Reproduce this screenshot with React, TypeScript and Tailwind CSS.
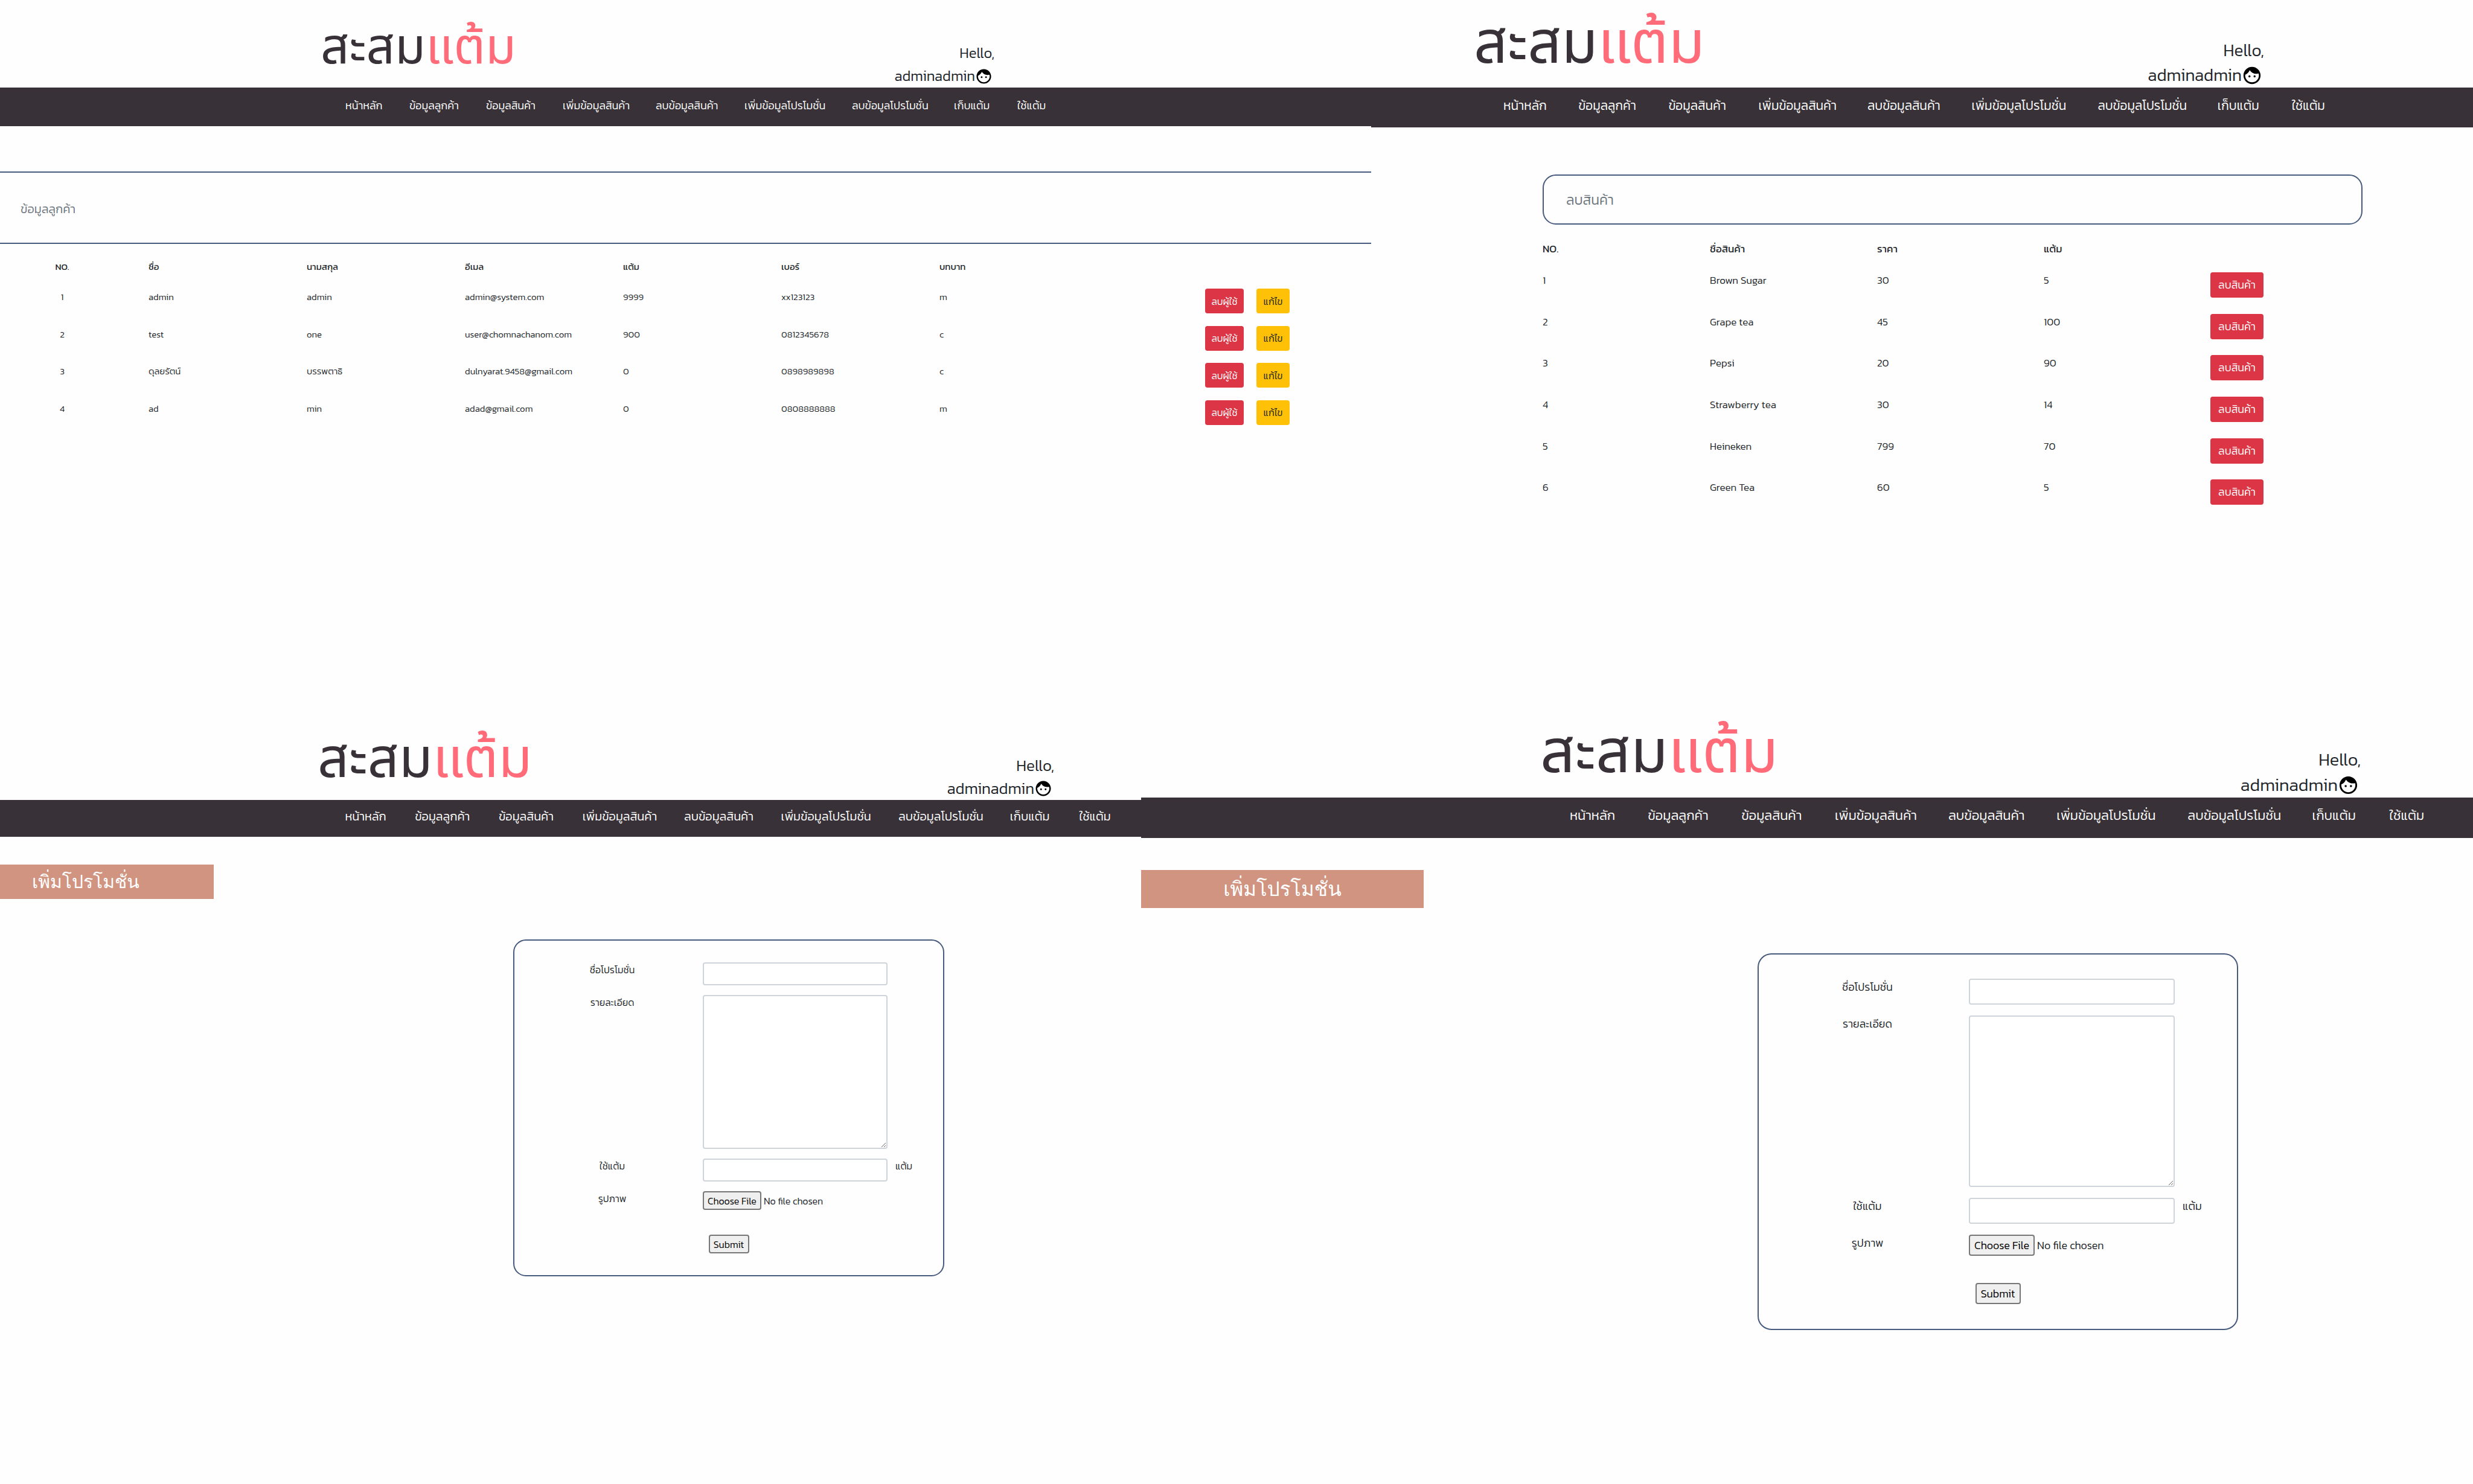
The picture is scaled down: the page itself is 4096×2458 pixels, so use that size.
import { useId } from "react";
import { MdFace } from "react-icons/md";

const navItems = [
  "หน้าหลัก",
  "ข้อมูลลูกค้า",
  "ข้อมูลสินค้า",
  "เพิ่มข้อมูลสินค้า",
  "ลบข้อมูลสินค้า",
  "เพิ่มข้อมูลโปรโมชั่น",
  "ลบข้อมูลโปรโมชั่น",
  "เก็บแต้ม",
  "ใช้แต้ม",
];

const customers = [
  ["1", "admin", "admin", "admin@system.com", "9999", "xx123123", "m"],
  ["2", "test", "one", "user@chomnachanom.com", "900", "0812345678", "c"],
  ["3", "ดุลยรัตน์", "บรรพตาธิ", "dulnyarat.9458@gmail.com", "0", "0898989898", "c"],
  ["4", "ad", "min", "adad@gmail.com", "0", "0808888888", "m"],
];

const products = [
  ["1", "Brown Sugar", "30", "5"],
  ["2", "Grape tea", "45", "100"],
  ["3", "Pepsi", "20", "90"],
  ["4", "Strawberry tea", "30", "14"],
  ["5", "Heineken", "799", "70"],
  ["6", "Green Tea", "60", "5"],
];

type HeaderStyle = {
  bar: string;
  logo: string;
  user: string;
  icon: string;
  nav: string;
  list: string;
};

function SiteHeader({ s }: { s: HeaderStyle }) {
  return (
    <>
      <header className={`grid items-end ${s.bar}`}>
        <a
          href="#"
          className={`col-start-2 whitespace-nowrap font-['Noto_Sans_Thai',Kanit,sans-serif] leading-[80px] text-[#383238] ${s.logo}`}
        >
          สะสม<span className="text-[#ff6b78]">แต้ม</span>
        </a>
        <div className={`text-right font-light ${s.user}`}>
          <p>Hello,</p>
          <p className="flex items-center justify-end pr-[3px]">
            adminadmin
            <MdFace className={`shrink-0 text-black ${s.icon}`} />
          </p>
        </div>
      </header>
      <nav className={`grid bg-[#383238] text-white ${s.nav}`}>
        <ul
          className={`col-start-2 grid grid-cols-[106fr_127fr_127fr_154fr_147fr_178fr_169fr_105fr_93fr] whitespace-nowrap font-light leading-[36px] ${s.list}`}
        >
          {navItems.map((item) => (
            <li key={item} className="min-w-0">
              <a href="#">{item}</a>
            </li>
          ))}
        </ul>
      </nav>
    </>
  );
}

function CustomersPanel() {
  const cols = "grid grid-cols-[246fr_262fr_262fr_262fr_262fr_262fr_440fr_275fr]";
  return (
    <section>
      <SiteHeader
        s={{
          bar: "h-[145px] grid-cols-[531fr_400fr_716fr_624fr]",
          logo: "pb-[25px] text-[83px]",
          user: "text-[24px] leading-[38px]",
          icon: "size-[29px]",
          nav: "h-[64px] pt-[12px] grid-cols-[572fr_1206fr_493fr]",
          list: "text-[18px]",
        }}
      />
      <main className="pt-[75px]">
        <h1 className="flex h-[120px] items-center border-y-2 border-[#465a7d] pl-[34px] pt-1 text-[20px] font-light text-[#6c757d]">
          ข้อมูลลูกค้า
        </h1>
        <table className="mt-[26px] block text-[15px] leading-[24px]">
          <thead className="block">
            <tr className={`${cols} text-left`}>
              <th className="pr-[40px] text-center font-normal">NO.</th>
              <th className="font-normal">ชื่อ</th>
              <th className="font-normal">นามสกุล</th>
              <th className="font-normal">อีเมล</th>
              <th className="font-normal">แต้ม</th>
              <th className="font-normal">เบอร์</th>
              <th className="font-normal">บทบาท</th>
            </tr>
          </thead>
          <tbody className="mt-[24px] grid h-[246px] auto-rows-fr font-light">
            {customers.map((row) => (
              <tr key={row[0]} className={cols}>
                {row.map((cell, i) => (
                  <td key={i} className={i === 0 ? "pr-[40px] pt-[2px] text-center" : "pt-[2px]"}>
                    {cell}
                  </td>
                ))}
                <td className="flex items-start gap-[21px]">
                  <button className="h-[41px] w-[64px] rounded-[4px] bg-[#dc3545] text-[16px] text-white">ลบผู้ใช้</button>
                  <button className="h-[41px] w-[55px] rounded-[4px] bg-[#ffc107] text-[16px]">แก้ไข</button>
                </td>
              </tr>
            ))}
          </tbody>
        </table>
      </main>
    </section>
  );
}

function ProductsPanel() {
  const cols = "grid grid-cols-[277fr_277fr_276fr_276fr_252fr]";
  return (
    <section>
      <SiteHeader
        s={{
          bar: "h-[145px] grid-cols-[170fr_500fr_809fr_346fr]",
          logo: "pb-[31px] text-[98px]",
          user: "text-[28px] leading-[41px]",
          icon: "size-[34px]",
          nav: "h-[66px] pt-[12px] grid-cols-[219fr_1415fr_191fr]",
          list: "text-[21px]",
        }}
      />
      <main className="grid grid-cols-[284fr_1358fr_183fr] pt-[78px]">
        <div className="col-start-2">
          <h1 className="flex h-[83px] items-center rounded-[22px] border-2 border-[#465a7d] pl-[37px] pt-px text-[23px] font-light text-[#6c757d]">
            ลบสินค้า
          </h1>
          <table className="mt-[28px] block text-[17px] leading-[24px]">
            <thead className="block">
              <tr className={`${cols} text-left`}>
                <th className="font-normal">NO.</th>
                <th className="font-normal">ชื่อสินค้า</th>
                <th className="font-normal">ราคา</th>
                <th className="font-normal">แต้ม</th>
              </tr>
            </thead>
            <tbody className="mt-[27px] grid h-[412px] auto-rows-fr font-light">
              {products.map((row) => (
                <tr key={row[0]} className={cols}>
                  {row.map((cell, i) => (
                    <td key={i} className="pt-px">
                      {cell}
                    </td>
                  ))}
                  <td>
                    <button className="h-[42px] w-[88px] rounded-[4px] bg-[#dc3545] text-[18px] text-white">ลบสินค้า</button>
                  </td>
                </tr>
              ))}
            </tbody>
          </table>
        </div>
      </main>
    </section>
  );
}

type FormStyle = {
  shell: string;
  card: string;
  grid: string;
  label: string;
  input: string;
  area: string;
  file: string;
  submit: string;
};

function PromotionForm({ s }: { s: FormStyle }) {
  const id = useId();
  const field = "w-full rounded-[4px] border-2 border-[#ced4da] bg-white px-3";
  return (
    <div className={`grid ${s.shell}`}>
      <form className={`col-start-2 border-2 border-[#465a7d] font-light ${s.card}`}>
        <div className={`grid items-start ${s.grid}`}>
          <label htmlFor={`${id}-name`} className={s.label}>
            ชื่อโปรโมชั่น
          </label>
          <input id={`${id}-name`} type="text" className={`${field} ${s.input}`} />
          <span />
          <label htmlFor={`${id}-detail`} className={s.label}>
            รายละเอียด
          </label>
          <textarea id={`${id}-detail`} className={`${field} block resize ${s.area}`} />
          <span />
          <label htmlFor={`${id}-points`} className={s.label}>
            ใช้แต้ม
          </label>
          <input id={`${id}-points`} type="text" className={`${field} ${s.input}`} />
          <span className="pl-[13px]">แต้ม</span>
          <label htmlFor={`${id}-image`} className={s.label}>
            รูปภาพ
          </label>
          <input
            id={`${id}-image`}
            type="file"
            className={`w-full file:rounded-[4px] file:border-2 file:border-[#767676] file:bg-[#efefef] file:text-black ${s.file}`}
          />
        </div>
        <button
          type="button"
          className={`mx-auto block rounded-[4px] border-2 border-[#767676] bg-[#efefef] text-black ${s.submit}`}
        >
          Submit
        </button>
      </form>
    </div>
  );
}

function PromotionPanelLeft() {
  return (
    <section>
      <SiteHeader
        s={{
          bar: "h-[167px] grid-cols-[526fr_500fr_720fr_144fr]",
          logo: "pb-[26px] text-[91px]",
          user: "text-[26px] leading-[38px]",
          icon: "size-[30px]",
          nav: "h-[61px] pt-[9px] grid-cols-[572fr_1319fr_1fr]",
          list: "text-[20px]",
        }}
      />
      <main className="pt-[46px]">
        <h1 className="h-[57px] w-[354px] bg-[#d09481] pl-[53px] font-[Loma,'Noto_Sans_Thai_Looped',sans-serif] text-[30px] leading-[57px] text-white">
          เพิ่มโปรโมชั่น
        </h1>
        <PromotionForm
          s={{
            shell: "mt-[67px] grid-cols-[850fr_714fr_326fr]",
            card: "rounded-[21px] pt-[36px] pb-[36px] text-[16px] leading-[24px]",
            grid: "grid-cols-[312fr_306fr_92fr] gap-y-[16px]",
            label: "pl-[12px] text-center",
            input: "h-[38px]",
            area: "h-[255px]",
            file: "text-[16px] file:h-[31px] file:px-[6px]",
            submit: "mt-[41px] h-[31px] w-[67px] text-[16px]",
          }}
        />
      </main>
    </section>
  );
}

function PromotionPanelRight() {
  return (
    <section>
      <SiteHeader
        s={{
          bar: "h-[163px] grid-cols-[661fr_500fr_859fr_186fr]",
          logo: "pb-[33px] text-[101px]",
          user: "text-[29px] leading-[42px]",
          icon: "size-[35px]",
          nav: "h-[67px] pt-[12px] grid-cols-[710fr_1471fr_25fr]",
          list: "text-[22px]",
        }}
      />
      <main className="pt-[53px]">
        <h1 className="h-[63px] w-[468px] bg-[#d09481] text-center font-[Loma,'Noto_Sans_Thai_Looped',sans-serif] text-[33px] leading-[63px] text-white">
          เพิ่มโปรโมชั่น
        </h1>
        <PromotionForm
          s={{
            shell: "mt-[75px] grid-cols-[1021fr_796fr_389fr]",
            card: "rounded-[23px] pt-[40px] pb-[41px] text-[18px] leading-[27px]",
            grid: "grid-cols-[348fr_341fr_103fr] gap-y-[18px]",
            label: "pl-[12px] text-center",
            input: "h-[43px]",
            area: "h-[284px]",
            file: "text-[18px] file:h-[35px] file:px-[7px]",
            submit: "mt-[45px] h-[35px] w-[75px] text-[18px]",
          }}
        />
      </main>
    </section>
  );
}

export default function App() {
  return (
    <div className="min-h-screen bg-[#fefefe] font-[Kanit,'Noto_Sans_Thai','Noto_Sans',sans-serif] text-[#212529]">
      <div className="grid min-h-[1158px] grid-cols-[2271fr_1825fr]">
        <CustomersPanel />
        <ProductsPanel />
      </div>
      <div className="grid grid-cols-[1890fr_2206fr]">
        <PromotionPanelLeft />
        <PromotionPanelRight />
      </div>
    </div>
  );
}
